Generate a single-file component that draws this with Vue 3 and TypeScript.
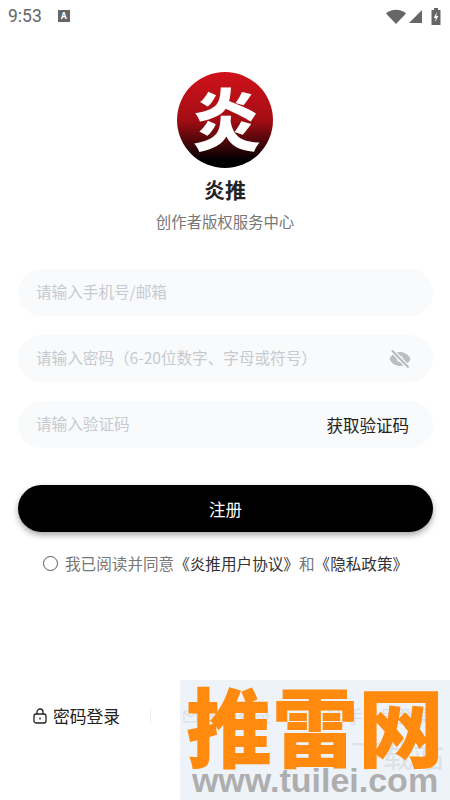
<script setup lang="ts">
const fields = [
  { id: 1, text: "请输入手机号/邮箱" },
  { id: 2, text: "请输入密码（6-20位数字、字母或符号）", eye: true },
  { id: 3, text: "请输入验证码", code: true },
];
</script>

<template>
  <div class="page">
    <div class="status">
      <div class="status-left">
        <span class="clock">9:53</span>
        <span class="note">A</span>
      </div>
      <div class="status-right">
        <svg width="20" height="15" viewBox="0 0 20 15"><path d="M0 4.500C5 -.5 15 -.5 20 4.500L10 15Z" fill="#666" /></svg>
        <svg width="15" height="15" viewBox="0 0 15 15"><path d="M14 1V14H1Z" fill="#666" /></svg>
        <svg class="battery" width="10" height="17" viewBox="0 0 10 17"><path d="M3 0H7V2H9.500V17H.5V2H3Z" fill="#666" /><path d="M5.800 4 2.800 10H4.800L4.200 14 7.300 8H5.300Z" fill="#fff" /></svg>
      </div>
    </div>

    <div class="brand">
      <div class="logo"><span>炎</span></div>
      <h1>炎推</h1>
      <p>创作者版权服务中心</p>
    </div>

    <div class="form">
      <div v-for="f in fields" :key="f.id" class="field">
        <span class="hint">{{ f.text }}</span>
        <svg v-if="f.eye" class="eye" width="24" height="24" viewBox="0 0 24 24">
          <path d="M1.500 12C4 7 8 5 12 5s8 2 10.500 7C20 17 16 19 12 19S4 17 1.500 12Z" fill="#b9bfbf" />
          <circle cx="12" cy="12" r="3" fill="#f9fafb" />
          <path d="M4 3.500 20.500 20.500" stroke="#f9fafb" stroke-width="4.500" />
          <path d="M4 3.500 20.500 20.500" stroke="#b4bbbb" stroke-width="2" />
        </svg>
        <span v-if="f.code" class="get-code">获取验证码</span>
      </div>
    </div>

    <button class="submit">注册</button>

    <div class="terms">
      <span class="radio"></span>
      <span>我已阅读并同意<b>《炎推用户协议》</b>和<b>《隐私政策》</b></span>
    </div>

    <div class="spacer"></div>

    <div class="logins">
      <div class="login">
        <svg width="14" height="16" viewBox="0 0 14 16" fill="none" stroke="#222" stroke-width="1.300">
          <rect x="1" y="6" width="12" height="9" rx="2" />
          <path d="M4 6V4a3 3 0 0 1 6 0v2" />
          <path d="M7 9.500v2" />
        </svg>
        <span>密码登录</span>
      </div>
      <i class="divider"></i>
      <div class="login mail">
        <svg width="15" height="13" viewBox="0 0 15 13" fill="none" stroke="#222" stroke-width="1.200">
          <rect x="1" y="1" width="13" height="11" rx="1" />
          <path d="M1 2l6.500 5L14 2" />
        </svg>
        <span>邮箱登录</span>
      </div>
      <i class="divider"></i>
      <div class="login">
        <svg width="11" height="16" viewBox="0 0 11 16" fill="none" stroke="#222" stroke-width="1.200">
          <rect x="1" y="1" width="9" height="14" rx="1.500" />
          <path d="M4 12.500h3" />
        </svg>
        <span>手机号登录</span>
      </div>
    </div>

    <div class="stamp">
      <span class="stamp-ghost">下载站</span>
      <div class="stamp-name">推雷网</div>
      <div class="stamp-site">www.tuilei.com</div>
    </div>
  </div>
</template>

<style>
html,
body {
  margin: 0;
  background: #fff;
}
</style>

<style scoped>
.page {
  position: relative;
  width: 450px;
  height: 800px;
  overflow: hidden;
  display: flex;
  flex-direction: column;
  background: #fff;
  color: #222;
  font-family: "Noto Sans CJK SC", "Noto Sans", sans-serif;
}
.status {
  height: 32px;
  flex: none;
  display: flex;
  justify-content: space-between;
  align-items: center;
  padding: 0 9px 0 8px;
}
.status-left,
.status-right {
  display: flex;
  align-items: center;
}
.status-right {
  gap: 2px;
}
.battery {
  margin-left: 6px;
}
.clock {
  font-family: Roboto, sans-serif;
  font-size: 17.500px;
  color: #666;
}
.note {
  width: 12px;
  height: 12px;
  margin-left: 16px;
  background: #666;
  color: #fff;
  font: 700 9px/12px Roboto, sans-serif;
  text-align: center;
}
.brand {
  display: flex;
  flex-direction: column;
  align-items: center;
  padding-top: 40px;
}
.logo {
  width: 96px;
  height: 96px;
  border-radius: 50%;
  background: linear-gradient(#d0121b 0%, #a40d14 50%, #000 92%);
  display: flex;
  align-items: center;
  justify-content: center;
}
.logo span {
  font-size: 68px;
  line-height: 84px;
  height: 90px;
  margin-left: 3px;
  font-weight: 900;
  color: #fff;
}
h1 {
  margin: 7px 0 0;
  font-size: 21px;
  line-height: 28px;
  font-weight: 700;
  color: #222;
}
p {
  margin: 7px 0 0;
  font-size: 15.400px;
  line-height: 22px;
  color: #777;
}
.form {
  display: flex;
  flex-direction: column;
  gap: 19px;
  margin-top: 37px;
  padding: 0 17px 0 18px;
}
.field {
  height: 47px;
  border-radius: 24px;
  background: #f9fafb;
  display: flex;
  align-items: center;
  justify-content: space-between;
  padding: 0 24px 0 19px;
}
.hint {
  font-size: 15.600px;
  line-height: 22px;
  margin: -4px 0 0 -1px;
  color: #c6cad0;
}
.eye {
  margin-right: -3px;
}
.get-code {
  font-size: 16.500px;
  color: #222;
}
.submit {
  display: block;
  flex: none;
  height: 47px;
  margin: 37px 17px 0 18px;
  border: 0;
  border-radius: 24px;
  background: #000;
  color: #fff;
  font: 16.500px "Noto Sans CJK SC", sans-serif;
  box-shadow: 0 3px 6px rgba(0, 0, 0, 0.35);
}
.terms {
  display: flex;
  align-items: center;
  gap: 7px;
  margin-top: 20px;
  padding-left: 43px;
  font-size: 15.600px;
  line-height: 22px;
  color: #777;
}
.terms b {
  font-weight: 400;
  color: #333;
}
.radio {
  width: 13px;
  height: 13px;
  border: 1.500px solid #555;
  border-radius: 50%;
}
.spacer {
  flex: 1;
}
.logins {
  display: flex;
  align-items: center;
  gap: 30px;
  height: 24px;
  margin-bottom: 72px;
  padding-left: 33px;
}
.login {
  display: flex;
  align-items: center;
  gap: 6px;
  font-size: 16.800px;
  white-space: nowrap;
}
.mail {
  margin: 0 -3px 0 2px;
}
.divider {
  width: 1px;
  height: 16px;
  background: #eee;
}
.stamp {
  position: absolute;
  left: 180px;
  top: 680px;
  width: 270px;
  height: 120px;
  padding-top: 6px;
  box-sizing: border-box;
  background: rgba(236, 242, 249, 0.9);
  text-align: center;
}
.stamp-ghost {
  position: absolute;
  right: 6px;
  top: 56px;
  font-size: 31px;
  line-height: 36px;
  color: #dde1e6;
}
.stamp-name {
  position: relative;
  font-size: 86px;
  line-height: 76px;
  font-weight: 900;
  color: #ff8a0d;
  white-space: nowrap;
}
.stamp-site {
  position: relative;
  font-family: "Liberation Sans", sans-serif;
  font-size: 34px;
  line-height: 36px;
  font-weight: 700;
  color: #aeaeae;
  white-space: nowrap;
}
</style>
